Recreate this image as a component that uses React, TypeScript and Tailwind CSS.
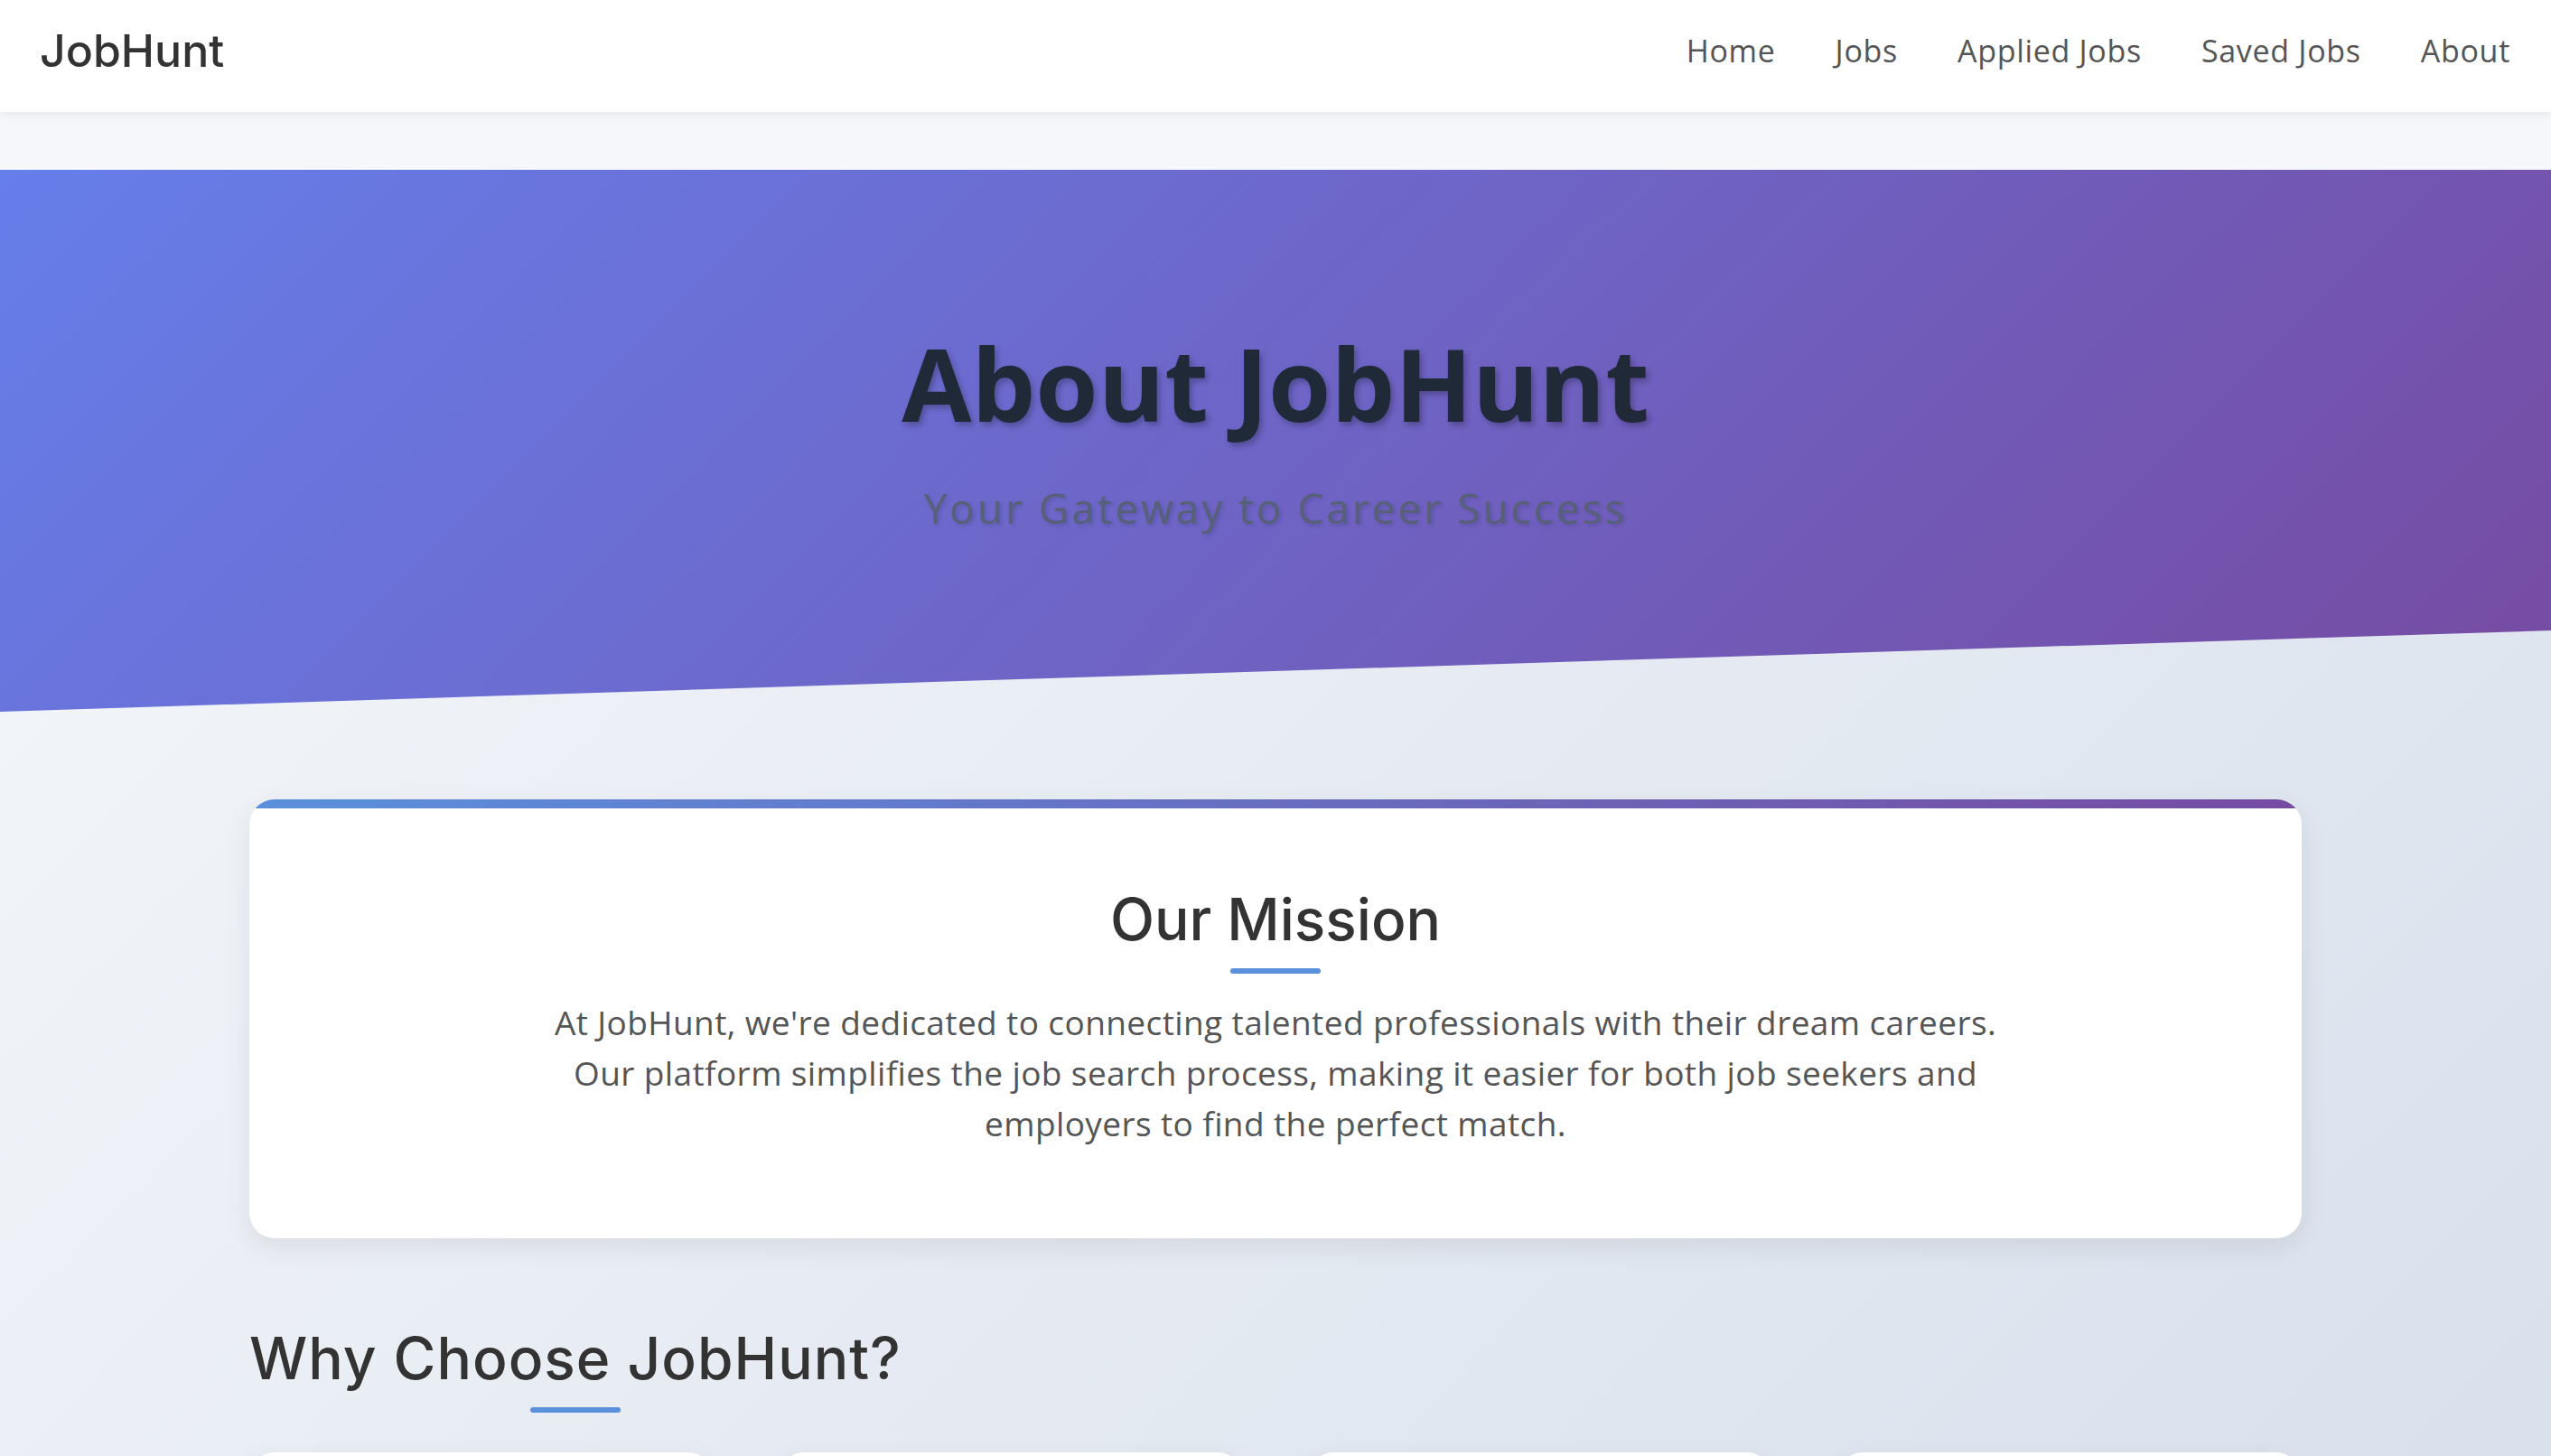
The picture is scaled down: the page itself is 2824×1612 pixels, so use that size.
import React from 'react';
import { Search, Send, Bookmark, Building2 } from 'lucide-react';

const navLinks = ['Home', 'Jobs', 'Applied Jobs', 'Saved Jobs', 'About'];

const features = [
  {
    icon: Search,
    title: 'Smart Job Search',
    text: 'Find roles that fit your skills with powerful filters and search.',
  },
  {
    icon: Send,
    title: 'Easy Applications',
    text: 'Apply to jobs in a few clicks and track every application.',
  },
  {
    icon: Bookmark,
    title: 'Save for Later',
    text: 'Bookmark interesting openings and come back when you are ready.',
  },
  {
    icon: Building2,
    title: 'Top Companies',
    text: 'Discover opportunities from trusted employers across industries.',
  },
];

export default function App() {
  return (
    <div className="min-h-screen bg-[#f5f7fa] font-['Open_Sans',sans-serif]">
      {/* Navbar */}
      <nav className="relative z-10 h-[124px] bg-white shadow-[0_2px_12px_rgba(0,0,0,0.08)]">
        <div className="flex h-[112px] items-center justify-between pl-[44px] pr-[45px]">
          <a className="font-['Inter',Arial,sans-serif] text-[50px] font-medium text-[#333]">JobHunt</a>
          <ul className="flex items-center gap-[66px] text-[34px] tracking-[0.7px] text-[#555]">
            {navLinks.map((link) => (
              <li key={link}>
                <a>{link}</a>
              </li>
            ))}
          </ul>
        </div>
      </nav>

      <main className="pt-[64px]">
        <div className="bg-[#c3cfe2] bg-[linear-gradient(135deg,#f5f7fa_0%,#c3cfe2_100%)] bg-[length:100%_4760px] bg-no-repeat pb-[120px]">
          {/* Hero */}
          <section className="h-[600px] bg-[linear-gradient(135deg,#667eea_0%,#764ba2_100%)] pt-[169px] text-center [clip-path:polygon(0_0,100%_0,100%_85%,0_100%)]">
            <h1 className="text-[112px] font-bold leading-[1.2] text-[#1f2937] [text-shadow:3px_4px_6px_rgba(0,0,0,0.25)]">
              About JobHunt
            </h1>
            <p className="mt-[37px] text-[46px] leading-[1.5] tracking-[3px] text-[#566078] [text-shadow:2px_2px_4px_rgba(0,0,0,0.15)]">
              Your Gateway to Career Success
            </p>
          </section>

          <div className="mx-auto w-[2272px] pt-[97px]">
            {/* Mission card */}
            <section className="overflow-hidden rounded-[28px] bg-white shadow-[0_10px_30px_rgba(0,0,0,0.08)]">
              <div className="h-[10px] bg-[linear-gradient(90deg,#5a90dd,#764ba2)]" />
              <div className="flex flex-col items-center px-[96px] pt-[85px] pb-[99px] text-center">
                <h2 className="font-['Inter',Arial,sans-serif] text-[64px] font-medium leading-[1.2] text-[#333]">
                  Our Mission
                </h2>
                <span className="mt-[15px] h-[6px] w-[100px] rounded-full bg-[#5a90dc]" />
                <p className="mt-[26px] text-[37px] leading-[56px] tracking-[0.4px] text-[#555]">
                  At JobHunt, we're dedicated to connecting talented professionals with their dream careers.
                  <br />
                  Our platform simplifies the job search process, making it easier for both job seekers and
                  <br />
                  employers to find the perfect match.
                </p>
              </div>
            </section>

            {/* Why choose */}
            <section className="pt-[95px]">
              <div className="inline-flex flex-col items-center">
                <h2 className="font-['Inter',Arial,sans-serif] text-[64px] font-medium leading-[1.2] tracking-[1px] text-[#333]">
                  Why Choose JobHunt?
                </h2>
                <span className="mt-[15px] h-[6px] w-[100px] rounded-full bg-[#5a90dc]" />
              </div>

              <div className="mt-[44px] grid grid-cols-4 gap-[72px]">
                {features.map(({ icon: Icon, title, text }) => (
                  <div
                    key={title}
                    className="rounded-[28px] bg-white p-[56px] text-center shadow-[0_10px_30px_rgba(0,0,0,0.08)]"
                  >
                    <div className="mx-auto flex h-[110px] w-[110px] items-center justify-center rounded-full bg-[linear-gradient(135deg,#667eea,#764ba2)] text-white">
                      <Icon className="h-[48px] w-[48px]" />
                    </div>
                    <h3 className="mt-[32px] font-['Inter',Arial,sans-serif] text-[40px] font-medium text-[#333]">
                      {title}
                    </h3>
                    <p className="mt-[16px] text-[30px] leading-[1.6] text-[#666]">{text}</p>
                  </div>
                ))}
              </div>
            </section>
          </div>
        </div>
      </main>
    </div>
  );
}
